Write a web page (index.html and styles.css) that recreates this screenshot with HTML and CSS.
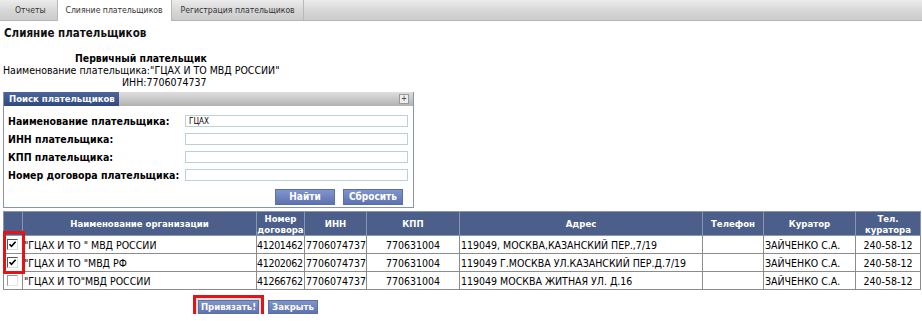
FILE: index.html
```html
<!DOCTYPE html>
<html lang="ru">
<head>
    <meta charset="UTF-8">
    <title>Слияние плательщиков</title>
    <link rel="stylesheet" href="styles.css">
</head>
<body>
    <div class="tabs">
        <span class="tab first">Отчеты</span>
        <span class="tab active">Слияние плательщиков</span>
        <span class="tab last">Регистрация плательщиков</span>
    </div>

    <h1 class="page-title">Слияние плательщиков</h1>

    <div class="primary">
        <div class="primary-head">Первичный плательщик</div>
        <div class="primary-name">Наименование плательщика:"ГЦАХ И ТО МВД РОССИИ"</div>
        <div class="primary-inn">ИНН:7706074737</div>
    </div>

    <div class="panel">
        <div class="panel-head">
            <span class="panel-tab">Поиск плательщиков</span>
            <span class="panel-toggle">+</span>
        </div>
        <div class="panel-body">
            <div class="field">
                <label>Наименование плательщика:</label>
                <input type="text" value="ГЦАХ">
            </div>
            <div class="field">
                <label>ИНН плательщика:</label>
                <input type="text">
            </div>
            <div class="field">
                <label>КПП плательщика:</label>
                <input type="text">
            </div>
            <div class="field">
                <label>Номер договора плательщика:</label>
                <input type="text">
            </div>
            <div class="panel-actions">
                <button class="btn">Найти</button>
                <button class="btn">Сбросить</button>
            </div>
        </div>
    </div>

    <div class="grid-wrap">
        <table class="grid">
            <colgroup>
                <col class="w-chk">
                <col class="w-name">
                <col class="w-num">
                <col class="w-inn">
                <col class="w-kpp">
                <col class="w-addr">
                <col class="w-phone">
                <col class="w-cur">
                <col class="w-curphone">
            </colgroup>
            <thead>
                <tr>
                    <th></th>
                    <th>Наименование организации</th>
                    <th>Номер договора</th>
                    <th>ИНН</th>
                    <th>КПП</th>
                    <th>Адрес</th>
                    <th>Телефон</th>
                    <th>Куратор</th>
                    <th>Тел. куратора</th>
                </tr>
            </thead>
            <tbody>
                <tr>
                    <td class="chk"><span class="box"><svg viewBox="0 0 9 9" width="9" height="9"><path d="M1.5 4.2 L3.5 6.4 L7.6 1.8" fill="none" stroke="#000" stroke-width="1.6"/></svg></span></td>
                    <td>"ГЦАХ И ТО " МВД РОССИИ</td>
                    <td class="num">41201462</td>
                    <td class="c">7706074737</td>
                    <td class="c">770631004</td>
                    <td>119049, МОСКВА,КАЗАНСКИЙ ПЕР.,7/19</td>
                    <td></td>
                    <td>ЗАЙЧЕНКО С.А.</td>
                    <td class="c">240-58-12</td>
                </tr>
                <tr>
                    <td class="chk"><span class="box"><svg viewBox="0 0 9 9" width="9" height="9"><path d="M1.5 4.2 L3.5 6.4 L7.6 1.8" fill="none" stroke="#000" stroke-width="1.6"/></svg></span></td>
                    <td>"ГЦАХ И ТО "МВД РФ</td>
                    <td class="num">41202062</td>
                    <td class="c">7706074737</td>
                    <td class="c">770631004</td>
                    <td>119049 Г.МОСКВА УЛ.КАЗАНСКИЙ ПЕР.Д.7/19</td>
                    <td></td>
                    <td>ЗАЙЧЕНКО С.А.</td>
                    <td class="c">240-58-12</td>
                </tr>
                <tr>
                    <td class="chk"><span class="box off"></span></td>
                    <td>"ГЦАХ И ТО"МВД РОССИИ</td>
                    <td class="num">41266762</td>
                    <td class="c">7706074737</td>
                    <td class="c">770631004</td>
                    <td>119049 МОСКВА ЖИТНАЯ УЛ. Д.16</td>
                    <td></td>
                    <td>ЗАЙЧЕНКО С.А.</td>
                    <td class="c">240-58-12</td>
                </tr>
            </tbody>
        </table>
        <div class="mark-checks"></div>
    </div>

    <div class="grid-actions">
        <span class="highlight"><button class="btn">Привязать!</button></span>
        <button class="btn">Закрыть</button>
    </div>
</body>
</html>
```

FILE: styles.css
```css
body {
    margin: 0;
    font-family: "DejaVu Sans Condensed", "DejaVu Sans", sans-serif;
    font-stretch: condensed;
    font-size: 10.5px;
    color: #000;
    background: #fff;
}
.tabs {
    height: 21px;
    display: flex;
    background: linear-gradient(#ececec, #d8d8d8 50%, #cbcbcb);
    border-bottom: 1px solid #b4b4b4;
    box-sizing: border-box;
}
.tab {
    line-height: 20px;
    font-size: 8.6px;
    color: #333;
    white-space: nowrap;
    border-right: 1px solid #b8b8b8;
}
.tab.first {
    padding: 0 11px 0 15px;
}
.tab.active {
    background: #fff;
    height: 21px;
    padding: 0 8px;
}
.tab.last {
    padding: 0 8px 0 9px;
}
.page-title {
    font-size: 11.5px;
    font-weight: bold;
    margin: 5px 0 0 4px;
    line-height: 14px;
    color: #111;
}
.primary {
    margin-top: 12px;
    line-height: 12px;
}
.primary-head {
    font-weight: bold;
    font-size: 10.4px;
    padding-left: 75px;
}
.primary-name {
    padding-left: 3px;
}
.primary-inn {
    padding-left: 122px;
}
.panel {
    margin: 4px 0 0 3px;
    width: 409px;
    border: 1px solid #8792b5;
    border-top: none;
}
.panel-head {
    height: 14px;
    display: flex;
    justify-content: space-between;
    align-items: center;
    background: linear-gradient(#dedede, #b2b2b2);
}
.panel-tab {
    background: linear-gradient(#4d6699, #2f4a80);
    color: #fff;
    font-weight: bold;
    font-size: 9.5px;
    line-height: 14px;
    padding: 0 5px;
    width: 105px;
    white-space: nowrap;
}
.panel-toggle {
    width: 8px;
    height: 8px;
    margin-right: 4px;
    border: 1px solid #999;
    background: #eee;
    font-size: 8px;
    line-height: 8px;
    text-align: center;
    color: #333;
}
.panel-body {
    padding: 6px 5px 2px 4px;
}
.field {
    display: flex;
    align-items: center;
    height: 18px;
}
.field label {
    width: 177px;
    font-weight: bold;
    font-size: 10.5px;
    white-space: nowrap;
}
.field input {
    width: 223px;
    height: 12px;
    box-sizing: border-box;
    border: 1px solid #b9d3d3;
    font-family: inherit;
    font-size: 8px;
    padding: 0 3px;
    margin: 0;
}
.panel-actions {
    display: flex;
    justify-content: flex-end;
    gap: 8px;
    padding: 5px 5px 0 0;
}
.btn {
    width: 60px;
    height: 16px;
    padding: 0;
    border: 1px solid #5a6ea8;
    background: linear-gradient(#8195cc, #5d72b0);
    color: #fff;
    font-family: inherit;
    font-stretch: condensed;
    font-weight: bold;
    font-size: 10px;
    line-height: 14px;
}
.grid-wrap {
    position: relative;
    margin: 3px 0 0 3px;
    width: 917px;
}
.grid {
    width: 917px;
    border-collapse: collapse;
    table-layout: fixed;
    border: 1px solid #6f6f6f;
}
.w-chk { width: 19px; }
.w-name { width: 234px; }
.w-num { width: 48px; }
.w-inn { width: 62px; }
.w-kpp { width: 93px; }
.w-addr { width: 243px; }
.w-phone { width: 61px; }
.w-cur { width: 92px; }
.w-curphone { width: 65px; }
.grid th {
    background: #4c5f8a;
    color: #fff;
    font-size: 9.5px;
    font-weight: bold;
    height: 23px;
    padding: 0;
    line-height: 11px;
    border: 1px solid #8a95b0;
}
.grid td {
    height: 17px;
    padding: 0 1px;
    border: 1px solid #8c8c8c;
    white-space: nowrap;
    overflow: hidden;
}
.grid td.c {
    text-align: center;
}
.grid td.num {
    padding: 0;
    letter-spacing: -0.3px;
}
.grid td.chk {
    padding: 0 0 0 3px;
}
.box {
    display: block;
    width: 9px;
    height: 9px;
    border: 1px solid;
    border-color: #555 #ddd #ddd #555;
    background: #fff;
}
.box svg {
    display: block;
}
.box.off {
    border-color: #999 #e4e4e4 #e4e4e4 #999;
}
.mark-checks {
    position: absolute;
    left: 0;
    top: 20px;
    width: 16px;
    height: 37px;
    border: 3px solid #e41414;
}
.grid-actions {
    display: flex;
    align-items: center;
    gap: 8px;
    padding: 10px 0 0 198px;
}
.highlight {
    display: flex;
    outline: 3px solid #e41414;
    outline-offset: 2px;
    box-shadow: 0 0 0 5px rgba(0, 0, 0, 0.12);
}
.grid-actions .btn {
    height: 14px;
    font-size: 9.5px;
    line-height: 12px;
}
.grid-actions .highlight .btn {
    width: 61px;
}
.grid-actions > .btn {
    width: 50px;
    margin-left: 1px;
}
```
